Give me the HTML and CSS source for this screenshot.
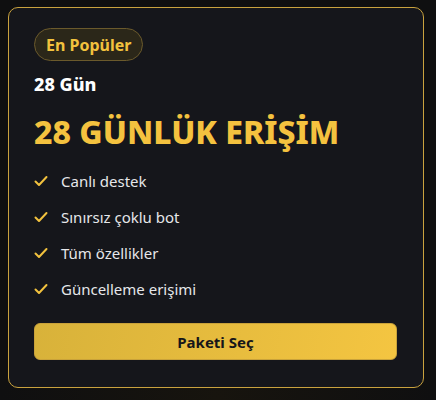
FILE: index.html
```html
<!DOCTYPE html>
<html lang="tr">
<head>
<meta charset="utf-8">
<link rel="stylesheet" href="styles.css">
</head>
<body>
<div class="page">
  <div class="card">
    <span class="badge">En Popüler</span>
    <div class="days">28 Gün</div>
    <h2 class="title">28 GÜNLÜK ERİŞİM</h2>
    <ul class="features">
      <li><svg class="check" viewBox="0 0 14 12" width="14" height="12"><path d="M1.5 6.5 L5 10 L12.5 2" fill="none" stroke="#f2c23e" stroke-width="2" stroke-linecap="round" stroke-linejoin="round"/></svg><span>Canlı destek</span></li>
      <li><svg class="check" viewBox="0 0 14 12" width="14" height="12"><path d="M1.5 6.5 L5 10 L12.5 2" fill="none" stroke="#f2c23e" stroke-width="2" stroke-linecap="round" stroke-linejoin="round"/></svg><span>Sınırsız çoklu bot</span></li>
      <li><svg class="check" viewBox="0 0 14 12" width="14" height="12"><path d="M1.5 6.5 L5 10 L12.5 2" fill="none" stroke="#f2c23e" stroke-width="2" stroke-linecap="round" stroke-linejoin="round"/></svg><span>Tüm özellikler</span></li>
      <li><svg class="check" viewBox="0 0 14 12" width="14" height="12"><path d="M1.5 6.5 L5 10 L12.5 2" fill="none" stroke="#f2c23e" stroke-width="2" stroke-linecap="round" stroke-linejoin="round"/></svg><span>Güncelleme erişimi</span></li>
    </ul>
    <button class="cta">Paketi Seç</button>
  </div>
</div>
</body>
</html>
```
FILE: styles.css
```css
html, body {
  margin: 0;
  height: 100%;
}
body {
  background: radial-gradient(ellipse at 50% 100%, #17140e 0%, #0f0f10 70%);
  background-color: #0f0f10;
  font-family: "Noto Sans", "Open Sans", sans-serif;
  color: #e6e7ea;
}
.page {
  padding: 7px 12px 0 8px;
}
.card {
  box-sizing: border-box;
  width: 416px;
  height: 381px;
  border: 1px solid #c9a23e;
  border-radius: 10px;
  background: #15161b;
  padding: 20px 26px 0 25px;
  display: flex;
  flex-direction: column;
  align-items: flex-start;
}
.badge {
  box-sizing: border-box;
  height: 33px;
  display: inline-flex;
  align-items: center;
  padding: 0 11px;
  border-radius: 17px;
  background: #2b2719;
  border: 1px solid #6b5a2c;
  color: #f2c23e;
  font-weight: 700;
  font-size: 16px;
}
.days {
  margin-top: 11px;
  font-size: 18px;
  font-weight: 800;
  color: #ffffff;
  line-height: 24px;
}
.title {
  margin: 16px 0 0;
  font-size: 32px;
  font-weight: 800;
  color: #f4c23f;
  line-height: 40px;
}
.features {
  list-style: none;
  margin: 18px 0 0;
  padding: 0;
  display: flex;
  flex-direction: column;
  gap: 14px;
}
.features li {
  display: flex;
  align-items: center;
  font-size: 15px;
  line-height: 22px;
  color: #e6e7ea;
}
.check {
  flex: none;
  margin-right: 13px;
}
.cta {
  margin-top: 23px;
  width: 100%;
  height: 37px;
  border: 1px solid #c9a23a;
  border-radius: 6px;
  background: linear-gradient(100deg, #d8b23a 0%, #f4c541 100%);
  color: #16161a;
  font-family: "Noto Sans", "Open Sans", sans-serif;
  font-weight: 700;
  font-size: 15px;
  cursor: pointer;
}
```
